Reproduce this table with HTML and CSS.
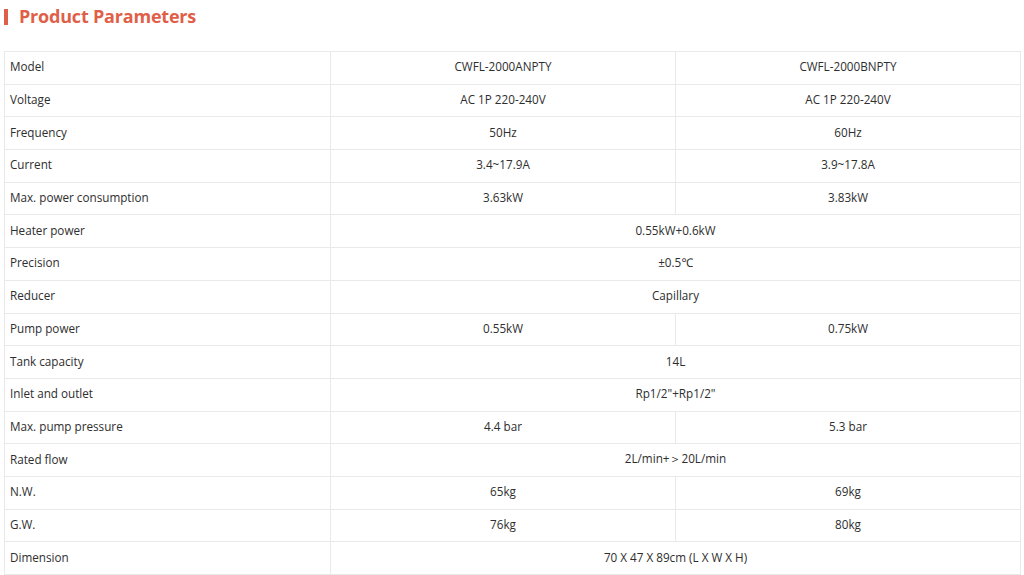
FILE: index.html
```html
<!DOCTYPE html>
<html>
<head>
<meta charset="utf-8">
<link rel="stylesheet" href="styles.css">
</head>
<body>
<div class="page">
  <h2 class="title"><span class="bar"></span>Product Parameters</h2>
  <table class="params">
    <colgroup><col class="c1"><col class="c2"><col class="c3"></colgroup>
    <tbody>
      <tr><td>Model</td><td>CWFL-2000ANPTY</td><td>CWFL-2000BNPTY</td></tr>
      <tr><td>Voltage</td><td>AC 1P 220-240V</td><td>AC 1P 220-240V</td></tr>
      <tr><td>Frequency</td><td>50Hz</td><td>60Hz</td></tr>
      <tr><td>Current</td><td>3.4~17.9A</td><td>3.9~17.8A</td></tr>
      <tr><td>Max. power consumption</td><td>3.63kW</td><td>3.83kW</td></tr>
      <tr><td>Heater power</td><td colspan="2">0.55kW+0.6kW</td></tr>
      <tr><td>Precision</td><td colspan="2">±0.5℃</td></tr>
      <tr><td>Reducer</td><td colspan="2">Capillary</td></tr>
      <tr><td>Pump power</td><td>0.55kW</td><td>0.75kW</td></tr>
      <tr><td>Tank capacity</td><td colspan="2">14L</td></tr>
      <tr><td>Inlet and outlet</td><td colspan="2">Rp1/2"+Rp1/2"</td></tr>
      <tr><td>Max. pump pressure</td><td>4.4 bar</td><td>5.3 bar</td></tr>
      <tr><td>Rated flow</td><td colspan="2">2L/min+＞20L/min</td></tr>
      <tr><td>N.W.</td><td>65kg</td><td>69kg</td></tr>
      <tr><td>G.W.</td><td>76kg</td><td>80kg</td></tr>
      <tr><td>Dimension</td><td colspan="2">70 X 47 X 89cm (L X W X H)</td></tr>
    </tbody>
  </table>
</div>
</body>
</html>
```
FILE: styles.css
```css
html, body {
  margin: 0;
  padding: 0;
  background: #fff;
}
.page {
  padding: 0 3px 0 4px;
  font-family: "Open Sans", "Noto Sans", sans-serif;
  color: #2e2e2e;
}
.title {
  margin: 0;
  height: 51px;
  display: flex;
  align-items: flex-start;
  padding-top: 4px;
  box-sizing: border-box;
  font-size: 18px;
  font-weight: 700;
  color: #df5f48;
  letter-spacing: -0.2px;
}
.bar {
  display: inline-block;
  width: 4px;
  height: 16px;
  background: #df5f48;
  margin: 5px 11px 0 0;
}
.params {
  width: 100%;
  border-collapse: collapse;
  table-layout: fixed;
  font-size: 11.7px;
}
.c1 { width: 326px; }
.c2 { width: 345px; }
.params td {
  border: 1px solid #e9e9e9;
  height: 32.7px;
  padding: 0 5px 3px;
  text-align: center;
  box-sizing: border-box;
}
.params td:first-child {
  text-align: left;
}
```
